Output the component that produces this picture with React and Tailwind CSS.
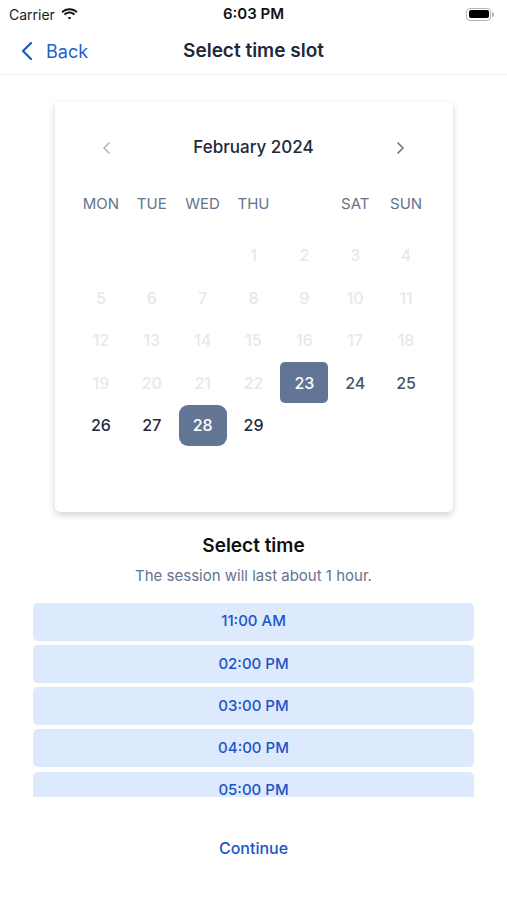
import React from 'react';

const days = [
  null, null, null, 1, 2, 3, 4,
  5, 6, 7, 8, 9, 10, 11,
  12, 13, 14, 15, 16, 17, 18,
  19, 20, 21, 22, 23, 24, 25,
  26, 27, 28, 29,
];

const weekdays = ['MON', 'TUE', 'WED', 'THU', '', 'SAT', 'SUN'];
const slots = ['11:00 AM', '02:00 PM', '03:00 PM', '04:00 PM', '05:00 PM'];

const Wifi = () => (
  <svg width="17" height="13" viewBox="0 0 17 13" fill="#111">
    <path d="M8.5 2.2c2.6 0 5 1 6.8 2.7l1.3-1.4C14.4 1.4 11.6.2 8.5.2S2.6 1.4.4 3.5l1.3 1.4C3.5 3.2 5.9 2.2 8.5 2.2z" />
    <path d="M8.5 5.6c1.6 0 3.1.6 4.3 1.7l1.3-1.4C12.6 4.5 10.6 3.6 8.5 3.6S4.4 4.5 2.9 5.9l1.3 1.4c1.2-1.1 2.7-1.7 4.3-1.7z" />
    <path d="M8.5 9c.7 0 1.3.3 1.8.7L8.5 11.6 6.7 9.7C7.2 9.3 7.8 9 8.5 9z" />
  </svg>
);

const Chevron = ({ dir, color }) => (
  <svg width="7" height="12" viewBox="0 0 7 12" fill="none" stroke={color} strokeWidth="1.6" strokeLinecap="round" strokeLinejoin="round">
    {dir === 'left' ? <path d="M6 1L1 6l5 5" /> : <path d="M1 1l5 5-5 5" />}
  </svg>
);

export default function App() {
  return (
    <div className="w-[507px] h-[900px] bg-white flex flex-col font-['Inter',sans-serif] overflow-hidden">
      {/* status bar */}
      <div className="h-[28px] grid grid-cols-3 items-center px-[9px]">
        <div className="flex items-center gap-[6px] text-[14px] text-[#1a1a1a]">
          Carrier
          <Wifi />
        </div>
        <div className="text-center text-[15px] font-semibold text-[#111]">6:03 PM</div>
        <div className="flex justify-end pr-[4px]">
          <div className="flex items-center">
            <div className="w-[25px] h-[13px] rounded-[4px] border border-[#b5b5b5] p-[1.5px]">
              <div className="w-full h-full rounded-[2px] bg-black" />
            </div>
            <div className="w-[2px] h-[5px] rounded-r-sm bg-[#b5b5b5] ml-[1px]" />
          </div>
        </div>
      </div>

      {/* nav bar */}
      <div className="h-[47px] relative flex items-center justify-center border-b border-[#eef0f3]">
        <div className="absolute left-[21px] flex items-center gap-[13px] text-[#1f5fcc] text-[18px]">
          <svg width="12" height="20" viewBox="0 0 12 20" fill="none" stroke="#1f5fcc" strokeWidth="2.4" strokeLinecap="round" strokeLinejoin="round">
            <path d="M10 2L2 10l8 8" />
          </svg>
          Back
        </div>
        <div className="text-[19px] font-semibold text-[#1e293b]">Select time slot</div>
      </div>

      {/* calendar card */}
      <div className="mt-[27px] mx-auto w-[398px] rounded-[5px] bg-white shadow-[0_3px_7px_rgba(0,0,0,0.18)] pt-[34px] pb-[65px]">
        <div className="h-[24px] flex items-center justify-between px-[48px]">
          <Chevron dir="left" color="#b8b8bd" />
          <div className="text-[17px] font-medium text-[#1e293b]">February 2024</div>
          <Chevron dir="right" color="#64748b" />
        </div>
        <div className="mt-[33px] px-[21px] grid grid-cols-7 h-[20px] items-center">
          {weekdays.map((d, i) => (
            <div key={i} className="text-center text-[15px] text-[#64748b]">{d}</div>
          ))}
        </div>
        <div className="mt-[21px] px-[21px] grid grid-cols-7 auto-rows-[42.5px]">
          {days.map((d, i) => {
            if (d === null) return <div key={i} />;
            const selected = d === 23 || d === 28;
            const disabled = d < 23;
            let cls = 'text-[#1e293b]';
            if (disabled) cls = 'text-[#e6e8ec]';
            else if (d === 24 || d === 25) cls = 'text-[#475569]';
            return (
              <div key={i} className="flex items-center justify-center">
                {selected ? (
                  <div className={`w-[48px] h-[41px] flex items-center justify-center bg-[#637594] text-white text-[16px] font-medium ${d === 28 ? 'rounded-[9px]' : 'rounded-[5px]'}`}>
                    {d}
                  </div>
                ) : (
                  <div className={`text-[16px] font-medium ${cls}`}>{d}</div>
                )}
              </div>
            );
          })}
        </div>
      </div>

      {/* time */}
      <div className="mt-[22px] text-center text-[19px] font-semibold text-[#111] leading-[24px]">Select time</div>
      <div className="mt-[8px] text-center text-[15px] text-[#64748b] leading-[20px]">The session will last about 1 hour.</div>

      <div className="mt-[17px] mx-[33px] h-[194px] overflow-hidden flex flex-col gap-[4.25px]">
        {slots.map((s) => (
          <div key={s} className="h-[38px] shrink-0 rounded-[5px] bg-[#dde9fc] flex items-center justify-center text-[15px] font-medium text-[#1d55c6]">
            {s}
          </div>
        ))}
      </div>

      <div className="mt-[41px] text-center text-[16px] font-medium text-[#1d55c6] leading-[20px]">Continue</div>
    </div>
  );
}
